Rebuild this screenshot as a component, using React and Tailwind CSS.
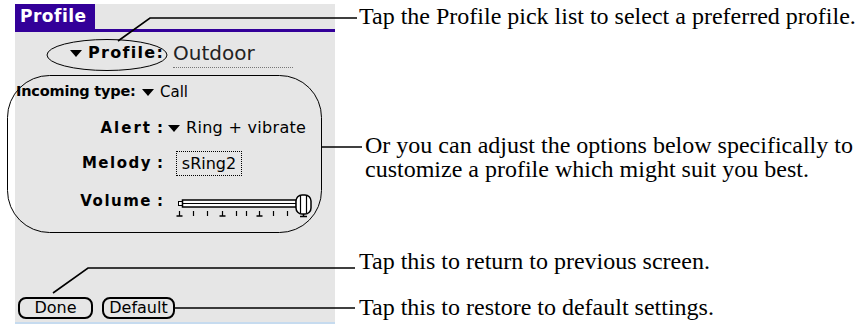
import { useState } from "react";

function Tri() {
  return (
    <svg width="12" height="7" viewBox="0 0 12 7" className="shrink-0">
      <polygon points="0,0 12,0 6,7" fill="black" />
    </svg>
  );
}

function VolumeSlider() {
  const ticks = [2, 16, 30, 45, 59, 69, 82, 96, 110];
  const feet = [2, 45, 82];
  return (
    <svg width="138" height="32" viewBox="0 0 138 32" className="overflow-visible">
      <rect x="1.5" y="15.5" width="4" height="4" fill="white" stroke="black" />
      <rect x="5.5" y="14" width="114" height="7" fill="white" stroke="black" strokeWidth="1.5" />
      <line x1="5.5" y1="17.5" x2="119.5" y2="17.5" stroke="black" strokeWidth="1.2" />
      {ticks.map((t) => (
        <line key={t} x1={t + 0.5} y1="25" x2={t + 0.5} y2="30" stroke="black" strokeWidth="1.2" />
      ))}
      {feet.map((t) => (
        <line key={"f" + t} x1={t - 2.5} y1="30" x2={t + 3.5} y2="30" stroke="black" strokeWidth="1.5" />
      ))}
      <rect x="119" y="9" width="15" height="19" rx="6" fill="white" stroke="black" strokeWidth="1.5" />
      <line x1="123.5" y1="10" x2="123.5" y2="27" stroke="black" strokeWidth="1.2" />
      <line x1="129.5" y1="10" x2="129.5" y2="27" stroke="black" strokeWidth="1.2" />
      <line x1="126.5" y1="28" x2="126.5" y2="30" stroke="black" strokeWidth="1.5" />
      <line x1="123" y1="30.5" x2="130" y2="30.5" stroke="black" strokeWidth="1.5" />
    </svg>
  );
}

function PalmScreen() {
  const [pressed, setPressed] = useState("");
  return (
    <div className="w-[320px] h-[320px] mt-[4px] ml-[15px] bg-[#e6e6e6] border-b-2 border-[#c6dbef] flex flex-col font-['DejaVu_Sans',sans-serif] text-black">
      <div className="flex h-[28px] shrink-0">
        <div className="w-[80px] h-full bg-[#330099] text-white text-[17px] font-bold tracking-[0.5px] leading-[25px] pl-[5px]">
          Profile
        </div>
        <div className="flex-1 border-b-[3px] border-[#330099]" />
      </div>

      <div className="mt-[6px] h-[30px] flex items-center pl-[55px]">
        <Tri />
        <span className="ml-[6px] w-[85px] text-[16px] font-bold tracking-[1.3px]">Profile:</span>
        <div className="w-[120px] h-[30px] border-b border-dotted border-[#777] text-[20px] leading-[30px] text-[#222]">
          Outdoor
        </div>
      </div>

      <div className="mt-[14px] h-[20px] flex items-center pl-[1px]">
        <span className="w-[126px] text-[14.5px] font-bold tracking-[-0.2px]">Incoming type:</span>
        <Tri />
        <span className="ml-[6px] text-[15px]">Call</span>
      </div>

      <div className="mt-[16px] h-[20px] flex items-center">
        <span className="w-[137px] text-right text-[15px] font-bold tracking-[2px]">Alert</span>
        <span className="w-[16px] text-center text-[15px] font-bold">:</span>
        <Tri />
        <span className="ml-[6px] text-[16px] tracking-[0.3px]">Ring + vibrate</span>
      </div>

      <div className="mt-[13px] h-[25px] flex items-center">
        <span className="w-[137px] text-right text-[15px] font-bold tracking-[1.5px]">Melody</span>
        <span className="w-[16px] text-center text-[15px] font-bold">:</span>
        <div className="ml-[8px] w-[66px] h-[25px] border border-dotted border-black flex items-center justify-center text-[16px]">
          sRing2
        </div>
      </div>

      <div className="mt-[10px] h-[30px] flex items-start">
        <span className="w-[137px] h-[30px] leading-[30px] text-right text-[15px] font-bold tracking-[1.5px]">Volume</span>
        <span className="w-[16px] h-[30px] leading-[30px] text-center text-[15px] font-bold">:</span>
        <div className="ml-[9px]">
          <VolumeSlider />
        </div>
      </div>

      <div className="mt-auto pb-[3px] pl-[3px] flex gap-[9px]">
        <button
          onClick={() => setPressed("done")}
          className={"w-[75px] h-[22px] border-2 border-black rounded-[8px] text-[16px] leading-[18px] " + (pressed === "done" ? "bg-black text-white" : "")}
        >
          Done
        </button>
        <button
          onClick={() => setPressed("default")}
          className={"w-[73px] h-[22px] border-2 border-black rounded-[8px] text-[16px] leading-[18px] " + (pressed === "default" ? "bg-black text-white" : "")}
        >
          Default
        </button>
      </div>
    </div>
  );
}

function Callouts() {
  return (
    <svg width="868" height="326" viewBox="0 0 868 326" className="absolute inset-0 pointer-events-none">
      <ellipse cx="107" cy="55" rx="60" ry="15.5" fill="none" stroke="black" strokeWidth="1" />
      <polyline points="118,41 150,18 357,18" fill="none" stroke="black" strokeWidth="1.6" />
      <rect x="7.5" y="75.5" width="314" height="157" rx="42" fill="none" stroke="black" strokeWidth="1" />
      <line x1="322" y1="147" x2="362" y2="147" stroke="black" strokeWidth="1.6" />
      <polyline points="53,293 88,268 355,268" fill="none" stroke="black" strokeWidth="1.6" />
      <line x1="175" y1="308" x2="355" y2="308" stroke="black" strokeWidth="1.6" />
    </svg>
  );
}

export default function App() {
  return (
    <main className="relative w-[868px] h-[326px] bg-white flex overflow-hidden">
      <PalmScreen />
      <div className="flex flex-col pt-[3px] font-['Liberation_Serif',serif] text-[24px] leading-[27px] text-black whitespace-nowrap">
        <p className="ml-[24px]">Tap the Profile pick list to select a preferred profile.</p>
        <p className="ml-[30px] mt-[103px] leading-[24px]">
          Or you can adjust the options below specifically to
          <br />
          customize a profile which might suit you best.
        </p>
        <p className="ml-[24px] mt-[67px]">Tap this to return to previous screen.</p>
        <p className="ml-[24px] mt-[19px]">Tap this to restore to default settings.</p>
      </div>
      <Callouts />
    </main>
  );
}
